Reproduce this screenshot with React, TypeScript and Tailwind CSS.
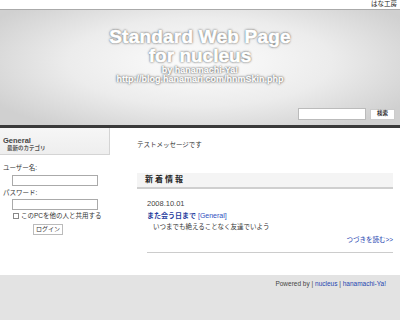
import React from 'react';

const font = { fontFamily: '"Liberation Sans", "Noto Sans CJK JP", sans-serif' };

export default function App() {
    return (
        <div className="w-[400px] h-[320px] overflow-hidden bg-white text-[#333]" style={font}>
            {/* top strip */}
            <div className="h-[9px] flex justify-end items-center pr-[3px] text-[6.5px] leading-none text-[#222]">
                はな工房
            </div>

            {/* header */}
            <div className="h-[116px] border-t border-[#aaa] bg-[radial-gradient(ellipse_60%_70%_at_50%_45%,#fdfdfd_0%,#ececec_55%,#d0d0d0_100%)] flex flex-col">
                <div className="flex flex-col items-center pt-[17px] text-white font-bold [-webkit-text-stroke:0.7px_white] [text-shadow:0_0_1px_#444,0_0_2px_#666,0_0_3px_#999]">
                    <div className="text-[19px] leading-[19px] tracking-[0.2px]">Standard Web Page</div>
                    <div className="text-[19px] leading-[19px]">for nucleus</div>
                    <div className="text-[9px] leading-[9px] mt-[1px] [-webkit-text-stroke:0.3px_white]">by hanamachi-Ya!</div>
                    <div className="text-[9px] leading-[9px] [-webkit-text-stroke:0.3px_white]">http://blog.hanamari.com/hnmSkin.php</div>
                </div>
                <div className="mt-auto mb-[5px] flex justify-end items-center gap-[4px] pr-[5px]">
                    <input className="w-[68px] h-[12px] bg-white border border-[#bbb]" />
                    <button className="w-[25px] h-[11px] bg-white border border-[#ccc] text-[5.5px] leading-none font-bold text-[#333]">
                        検索
                    </button>
                </div>
            </div>
            <div className="h-[3px] bg-[#3a3a3a]" />

            {/* content */}
            <div className="flex h-[147px]">
                <div className="w-[110px] shrink-0">
                    <div className="h-[27px] bg-[linear-gradient(#f6f6f6,#eeeeee)] border-r border-b border-[#d4d4d4] pl-[3px] pt-[9px]">
                        <div className="text-[7.5px] leading-[8px] font-bold text-[#444]">General</div>
                        <div className="text-[5.5px] leading-[7px] font-bold text-[#555] pl-[4px]">最新のカテゴリ</div>
                    </div>
                    <div className="pl-[3px] pt-[10px] text-[6.5px] leading-none text-[#333]">
                        <div>ユーザー名:</div>
                        <input className="block ml-[9px] mt-[3px] w-[86px] h-[11px] border border-[#aaa] bg-white" />
                        <div className="mt-[4px]">パスワード:</div>
                        <input className="block ml-[9px] mt-[3px] w-[86px] h-[11px] border border-[#aaa] bg-white" />
                        <div className="flex items-center gap-[2px] ml-[10px] mt-[3px]">
                            <span className="inline-block w-[6px] h-[6px] border border-[#888] bg-white" />
                            <span>このPCを他の人と共用する</span>
                        </div>
                        <div className="ml-[30px] mt-[4px]">
                            <button className="w-[30px] h-[11px] border border-[#bbb] bg-white text-[6px] leading-none">
                                ログイン
                            </button>
                        </div>
                    </div>
                </div>

                <div className="flex-1 pl-[27px] pr-[7px]">
                    <div className="mt-[14px] text-[6.5px] leading-none text-[#333]">テストメッセージです</div>
                    <div className="mt-[24px] h-[16px] bg-[#f4f4f4] border-b-2 border-[#cfcfcf] flex items-center pl-[8px] text-[8px] font-bold tracking-[2px] text-[#222]">
                        新着情報
                    </div>
                    <div className="pl-[10px]">
                        <div className="mt-[11px] text-[7.5px] leading-none text-[#444]">2008.10.01</div>
                        <div className="mt-[5px] text-[7px] leading-none">
                            <span className="font-bold text-[#1f3c9e]">また会う日まで</span>
                            <span className="text-[#3050c0]"> [General]</span>
                        </div>
                        <div className="mt-[5px] pl-[6px] text-[6.5px] leading-none text-[#333]">いつまでも絶えることなく友達でいよう</div>
                        <div className="mt-[6px] text-right text-[6.5px] leading-none text-[#2545b0]">つづきを読む&gt;&gt;</div>
                        <div className="mt-[9px] h-[1px] bg-[#ccc]" />
                    </div>
                </div>
            </div>

            {/* footer */}
            <div className="h-[45px] bg-[#e3e3e3] flex justify-end pr-[14px] pt-[6px] text-[6.5px] leading-none text-[#444]">
                <span>
                    Powered by | <span className="text-[#2545b0]">nucleus</span> | <span className="text-[#2545b0]">hanamachi-Ya!</span>
                </span>
            </div>
        </div>
    );
}
